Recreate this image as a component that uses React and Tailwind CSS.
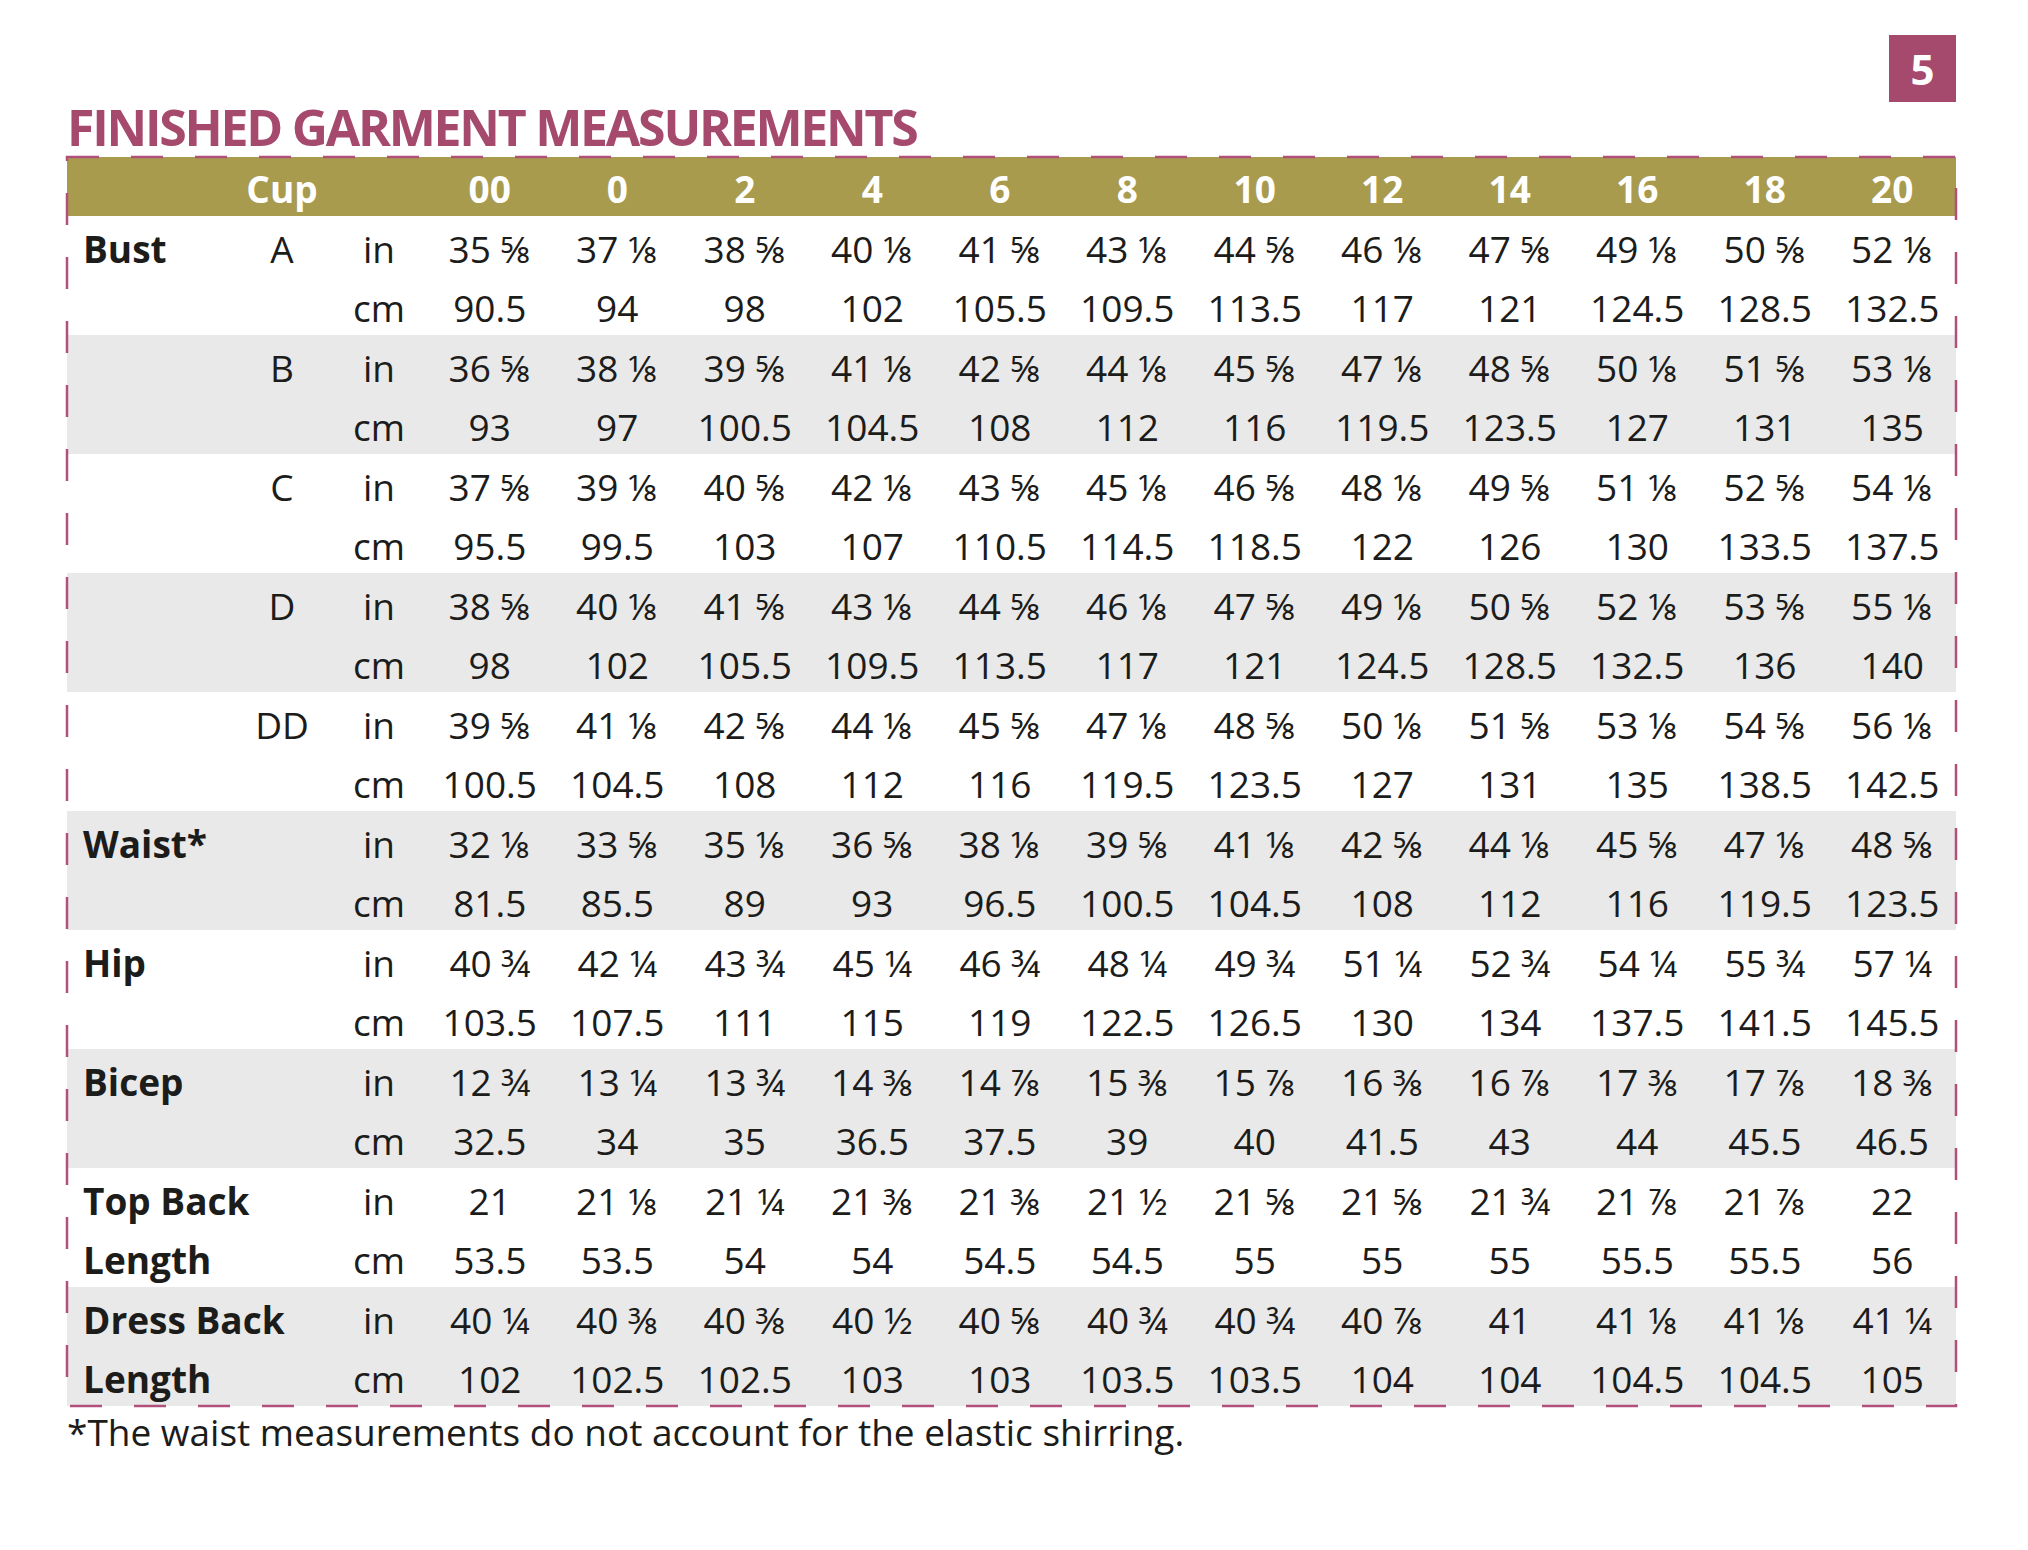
const sizes = ['00', '0', '2', '4', '6', '8', '10', '12', '14', '16', '18', '20'];

// each group = two rows (in / cm); shaded groups alternate
const groups = [
  {
    label: 'Bust', cup: 'A',
    inch: ['35 ⅝', '37 ⅛', '38 ⅝', '40 ⅛', '41 ⅝', '43 ⅛', '44 ⅝', '46 ⅛', '47 ⅝', '49 ⅛', '50 ⅝', '52 ⅛'],
    cm: ['90.5', '94', '98', '102', '105.5', '109.5', '113.5', '117', '121', '124.5', '128.5', '132.5'],
  },
  {
    cup: 'B',
    inch: ['36 ⅝', '38 ⅛', '39 ⅝', '41 ⅛', '42 ⅝', '44 ⅛', '45 ⅝', '47 ⅛', '48 ⅝', '50 ⅛', '51 ⅝', '53 ⅛'],
    cm: ['93', '97', '100.5', '104.5', '108', '112', '116', '119.5', '123.5', '127', '131', '135'],
  },
  {
    cup: 'C',
    inch: ['37 ⅝', '39 ⅛', '40 ⅝', '42 ⅛', '43 ⅝', '45 ⅛', '46 ⅝', '48 ⅛', '49 ⅝', '51 ⅛', '52 ⅝', '54 ⅛'],
    cm: ['95.5', '99.5', '103', '107', '110.5', '114.5', '118.5', '122', '126', '130', '133.5', '137.5'],
  },
  {
    cup: 'D',
    inch: ['38 ⅝', '40 ⅛', '41 ⅝', '43 ⅛', '44 ⅝', '46 ⅛', '47 ⅝', '49 ⅛', '50 ⅝', '52 ⅛', '53 ⅝', '55 ⅛'],
    cm: ['98', '102', '105.5', '109.5', '113.5', '117', '121', '124.5', '128.5', '132.5', '136', '140'],
  },
  {
    cup: 'DD',
    inch: ['39 ⅝', '41 ⅛', '42 ⅝', '44 ⅛', '45 ⅝', '47 ⅛', '48 ⅝', '50 ⅛', '51 ⅝', '53 ⅛', '54 ⅝', '56 ⅛'],
    cm: ['100.5', '104.5', '108', '112', '116', '119.5', '123.5', '127', '131', '135', '138.5', '142.5'],
  },
  {
    label: 'Waist*',
    inch: ['32 ⅛', '33 ⅝', '35 ⅛', '36 ⅝', '38 ⅛', '39 ⅝', '41 ⅛', '42 ⅝', '44 ⅛', '45 ⅝', '47 ⅛', '48 ⅝'],
    cm: ['81.5', '85.5', '89', '93', '96.5', '100.5', '104.5', '108', '112', '116', '119.5', '123.5'],
  },
  {
    label: 'Hip',
    inch: ['40 ¾', '42 ¼', '43 ¾', '45 ¼', '46 ¾', '48 ¼', '49 ¾', '51 ¼', '52 ¾', '54 ¼', '55 ¾', '57 ¼'],
    cm: ['103.5', '107.5', '111', '115', '119', '122.5', '126.5', '130', '134', '137.5', '141.5', '145.5'],
  },
  {
    label: 'Bicep',
    inch: ['12 ¾', '13 ¼', '13 ¾', '14 ⅜', '14 ⅞', '15 ⅜', '15 ⅞', '16 ⅜', '16 ⅞', '17 ⅜', '17 ⅞', '18 ⅜'],
    cm: ['32.5', '34', '35', '36.5', '37.5', '39', '40', '41.5', '43', '44', '45.5', '46.5'],
  },
  {
    label: 'Top Back', label2: 'Length',
    inch: ['21', '21 ⅛', '21 ¼', '21 ⅜', '21 ⅜', '21 ½', '21 ⅝', '21 ⅝', '21 ¾', '21 ⅞', '21 ⅞', '22'],
    cm: ['53.5', '53.5', '54', '54', '54.5', '54.5', '55', '55', '55', '55.5', '55.5', '56'],
  },
  {
    label: 'Dress Back', label2: 'Length',
    inch: ['40 ¼', '40 ⅜', '40 ⅜', '40 ½', '40 ⅝', '40 ¾', '40 ¾', '40 ⅞', '41', '41 ⅛', '41 ⅛', '41 ¼'],
    cm: ['102', '102.5', '102.5', '103', '103', '103.5', '103.5', '104', '104', '104.5', '104.5', '105'],
  },
];

const gridCols = 'grid grid-cols-[165px_100px_94px_repeat(12,minmax(0,1fr))]';

const Row = ({ label, cup, unit, values }) => (
  <div className={`${gridCols} h-[59.5px] items-center pt-[5px]`}>
    <div className="pl-[16px] font-bold whitespace-nowrap">{label}</div>
    <div className="text-center">{cup}</div>
    <div className="text-center">{unit}</div>
    {values.map((v, i) => (
      <div key={i} className="text-center whitespace-nowrap">{v}</div>
    ))}
  </div>
);

export default function App() {
  return (
    <div className="w-[2028px] h-[1550px] bg-white text-[#1c1c1b] font-['Open_Sans','Noto_Sans',sans-serif] overflow-hidden">
      <div className="pl-[67px] pr-[72px] pt-[35px]">
        {/* page number */}
        <div className="flex justify-end">
          <div className="w-[67px] h-[67px] bg-[#a64a6d] text-white font-bold text-[42px] flex items-center justify-center">
            5
          </div>
        </div>

        <h1 className="-mt-[3px] text-[#a64a6d] font-bold text-[50px] leading-[56px] tracking-[-0.045em]">
          FINISHED GARMENT MEASUREMENTS
        </h1>

        {/* table */}
        <div className="relative mt-[2px] text-[37px] leading-none">
          <div className={`${gridCols} h-[59px] items-center pt-[4px] bg-[#a89b4e] text-white font-bold`}>
            <div />
            <div className="text-center">Cup</div>
            <div />
            {sizes.map((s) => (
              <div key={s} className="text-center">{s}</div>
            ))}
          </div>

          {groups.map((g, i) => (
            <div key={i} className={i % 2 === 1 ? 'bg-[#e9e9e9]' : 'bg-white'}>
              <Row label={g.label} cup={g.cup} unit="in" values={g.inch} />
              <Row label={g.label2} unit="cm" values={g.cm} />
            </div>
          ))}

          {/* dashed outline */}
          <svg className="absolute inset-0 w-full h-full pointer-events-none overflow-visible">
            <rect
              x="0"
              y="0"
              width="100%"
              height="100%"
              fill="none"
              stroke="#b2507c"
              strokeWidth="2.5"
              strokeDasharray="32 32"
            />
          </svg>
        </div>

        <p className="mt-[4px] text-[37px] leading-[44px]">
          *The waist measurements do not account for the elastic shirring.
        </p>
      </div>
    </div>
  );
}
